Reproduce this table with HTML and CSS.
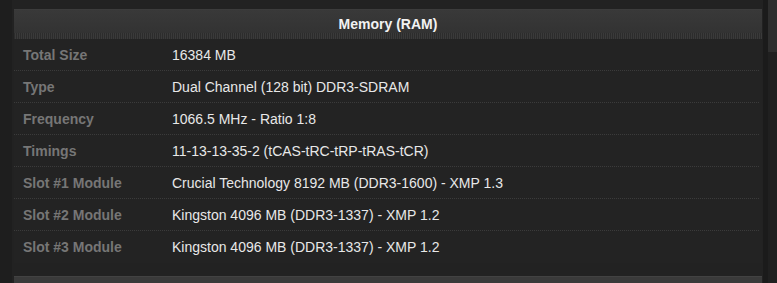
FILE: index.html
```html
<!DOCTYPE html>
<html>
<head>
<meta charset="utf-8">
<link rel="stylesheet" href="styles.css">
</head>
<body>
<div class="page">
  <div class="panel">
    <div class="card">
      <div class="card-title">Memory (RAM)</div>
      <div class="rows">
        <div class="row"><div class="label">Total Size</div><div class="value">16384 MB</div></div>
        <div class="row"><div class="label">Type</div><div class="value">Dual Channel (128 bit) DDR3-SDRAM</div></div>
        <div class="row"><div class="label">Frequency</div><div class="value">1066.5 MHz - Ratio 1:8</div></div>
        <div class="row"><div class="label">Timings</div><div class="value">11-13-13-35-2 (tCAS-tRC-tRP-tRAS-tCR)</div></div>
        <div class="row"><div class="label">Slot #1 Module</div><div class="value">Crucial Technology 8192 MB (DDR3-1600) - XMP 1.3</div></div>
        <div class="row"><div class="label">Slot #2 Module</div><div class="value">Kingston 4096 MB (DDR3-1337) - XMP 1.2</div></div>
        <div class="row"><div class="label">Slot #3 Module</div><div class="value">Kingston 4096 MB (DDR3-1337) - XMP 1.2</div></div>
      </div>
    </div>
    <div class="next-card"></div>
  </div>
  <div class="gutter"></div>
  <div class="scrollbar"><div class="thumb"></div></div>
</div>
</body>
</html>
```
FILE: styles.css
```css
html, body {
  margin: 0;
  padding: 0;
  height: 100%;
  overflow: hidden;
  background: #1e1e1e;
  font-family: "Liberation Sans", Arial, sans-serif;
}
.page {
  display: flex;
  height: 283px;
  padding-left: 12px;
}
.panel {
  width: 751px;
  background: #222222;
  padding: 9px 1px 0 2px;
  box-sizing: border-box;
  display: flex;
  flex-direction: column;
}
.card {
  background: #232323;
}
.card-title {
  height: 30px;
  box-sizing: border-box;
  border-top: 1px solid #3c3c3c;
  line-height: 29px;
  text-align: center;
  font-size: 14px;
  font-weight: bold;
  color: #f2f2f2;
  background:
    repeating-linear-gradient(90deg, #2c2c2c 0 1px, #3a3a3a 1px 2px) left bottom / 100% 6px no-repeat,
    linear-gradient(#393939, #313131);
}
.rows {
  display: flex;
  flex-direction: column;
}
.row {
  display: grid;
  grid-template-columns: 149px 1fr;
  height: 32px;
  box-sizing: border-box;
  align-items: center;
  padding-left: 9px;
  margin-right: 3px;
  border-bottom: 1px dotted #3b3b3b;
  font-size: 14px;
}
.row:last-child {
  border-bottom: none;
}
.label {
  font-weight: bold;
  color: #767676;
}
.value {
  color: #e8e8e8;
}
.next-card {
  margin-top: 13px;
  flex: 1;
  background: #3a3a3a;
  border-top: 1px solid #424242;
}
.gutter {
  width: 5px;
  background: #1b1b1b;
}
.scrollbar {
  width: 9px;
  background: #202020;
}
.thumb {
  height: 52px;
  background: #2e2e2e;
}
```
